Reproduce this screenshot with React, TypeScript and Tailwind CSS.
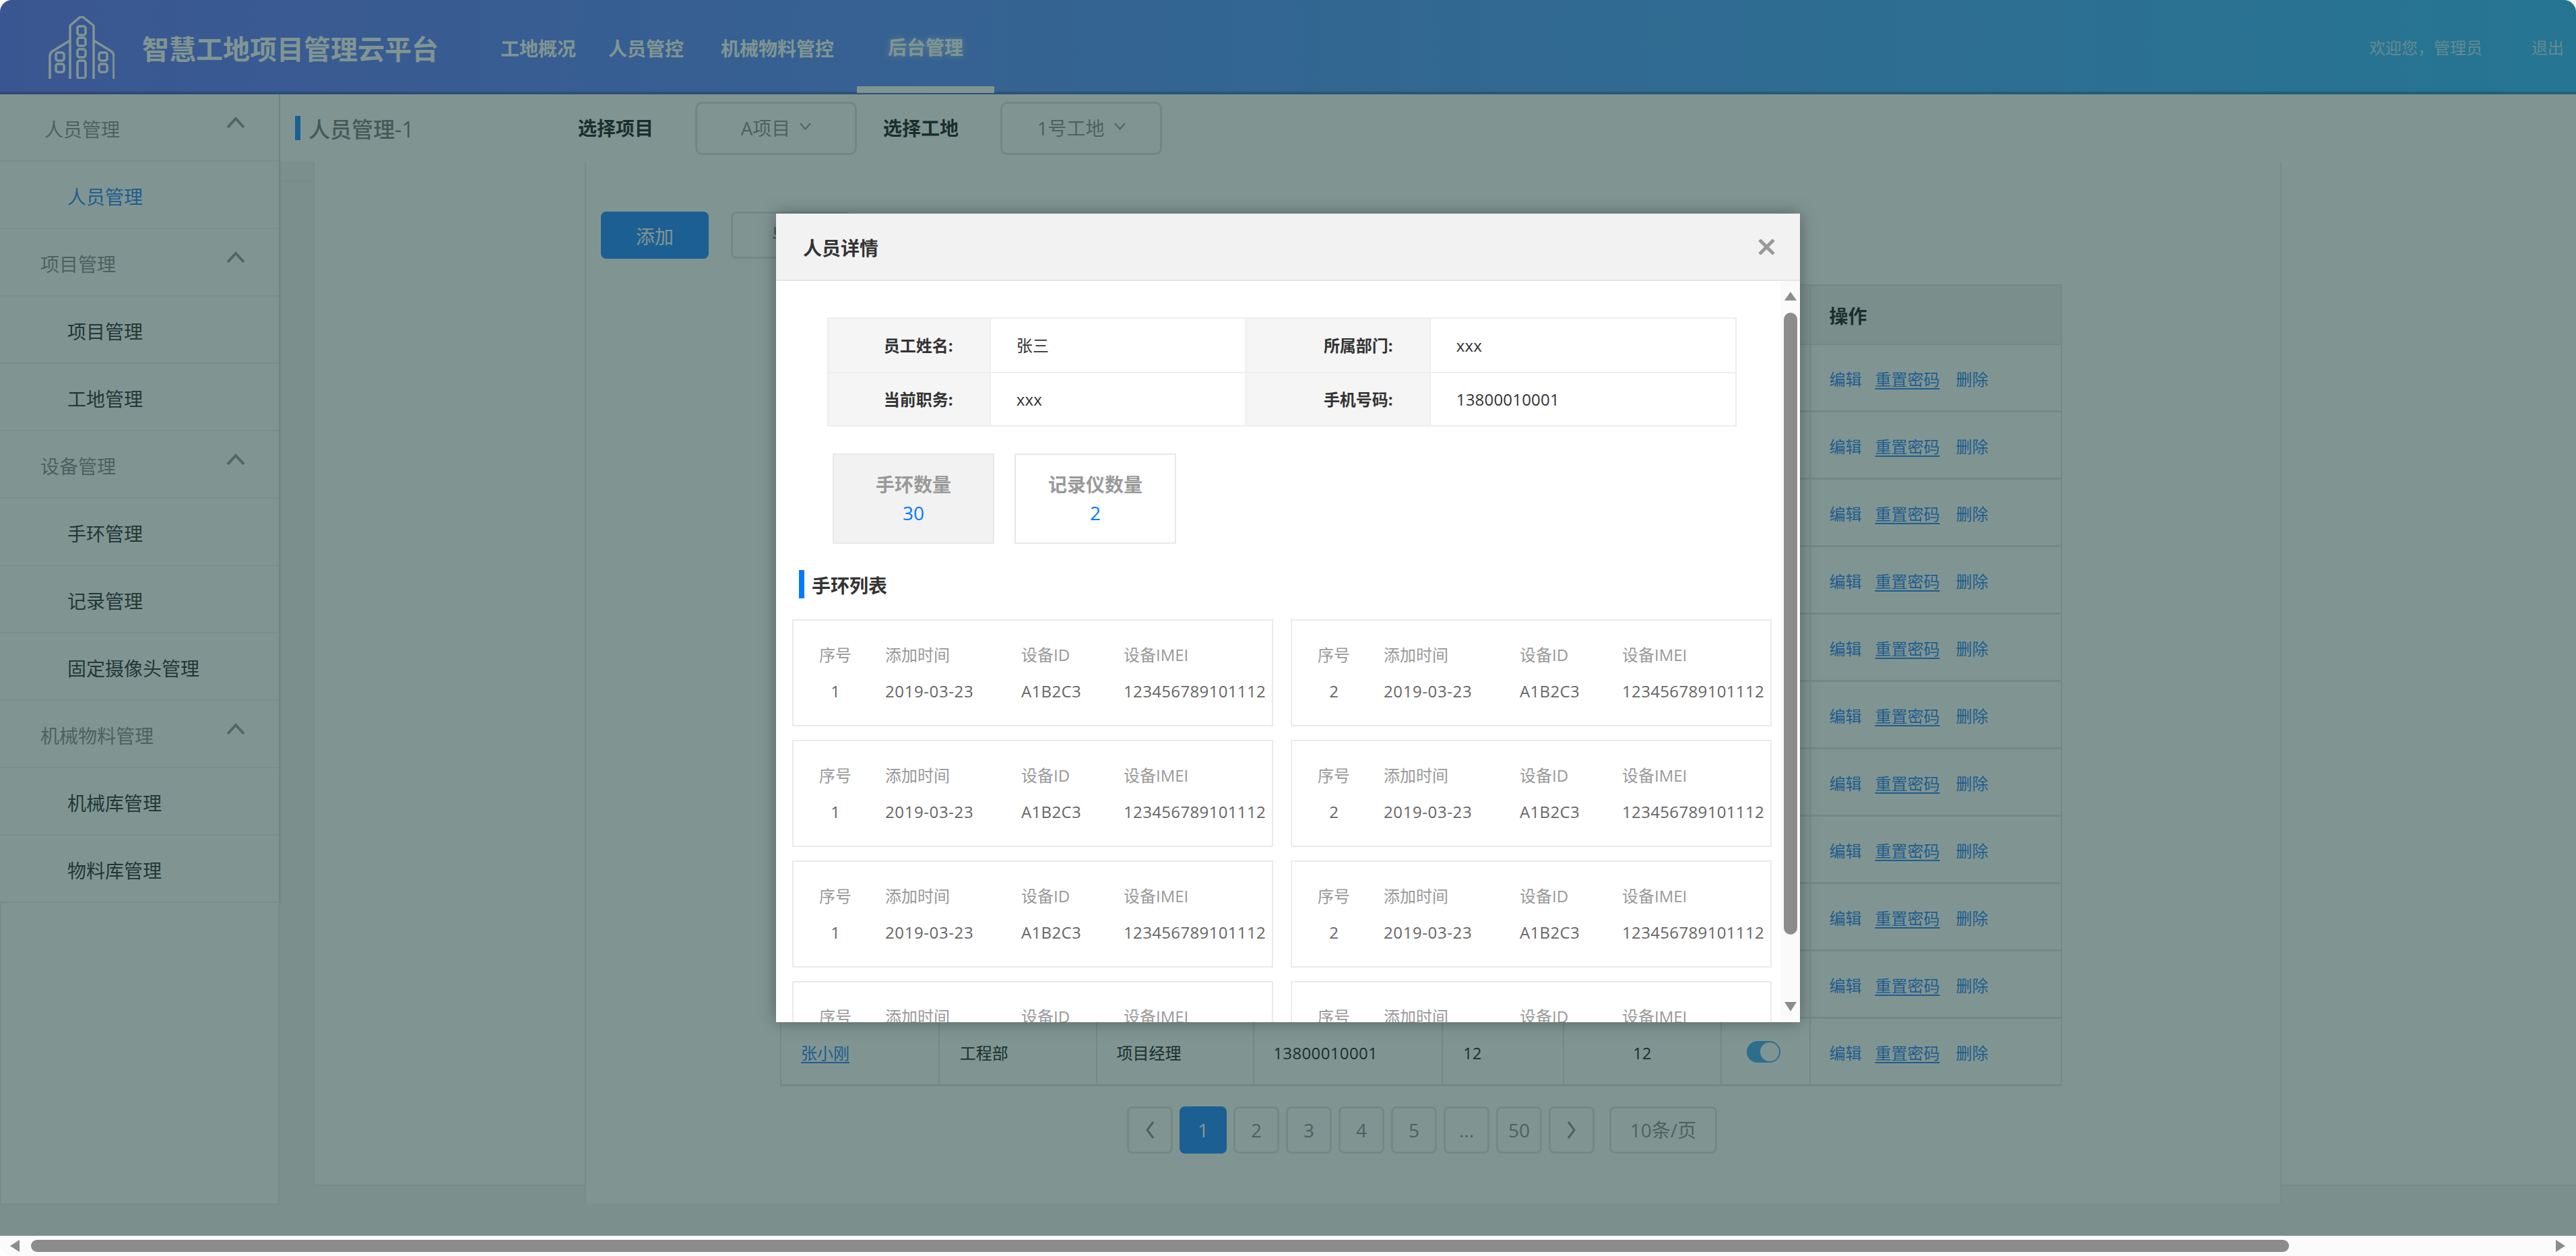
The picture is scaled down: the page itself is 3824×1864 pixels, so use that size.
import React from 'react';

const sideMenu = [
  { label: '人员管理', group: true, first: true },
  { label: '人员管理', active: true },
  { label: '项目管理', group: true },
  { label: '项目管理' },
  { label: '工地管理' },
  { label: '设备管理', group: true },
  { label: '手环管理' },
  { label: '记录管理' },
  { label: '固定摄像头管理' },
  { label: '机械物料管理', group: true },
  { label: '机械库管理' },
  { label: '物料库管理' },
];

const pages = ['1', '2', '3', '4', '5', '...', '50'];
const colWidths = ['w-[235px]', 'w-[234px]', 'w-[234px]', 'w-[280px]', 'w-[180px]', 'w-[234px]', 'w-[133px]', 'w-[373px]'];

function Logo() {
  return (
    <svg width="98" height="93" viewBox="0 0 98 93" fill="none" stroke="#ffffff" strokeWidth="3.5" strokeLinejoin="round" className="shrink-0">
      <path d="M32 93V14L46 2Q49 0 52 2L67 14V93" />
      <path d="M32 36L6 52Q2 55 2 60V93" />
      <path d="M67 36L93 52Q97 55 97 60V93" />
      <rect x="43" y="15" width="12" height="13" rx="3" />
      <rect x="43" y="32" width="12" height="12" rx="3" />
      <rect x="43" y="49" width="12" height="12" rx="3" />
      <rect x="43" y="66" width="12" height="26" rx="3" />
      <rect x="11" y="54" width="12" height="12" rx="3" />
      <rect x="11" y="71" width="12" height="12" rx="3" />
      <rect x="75" y="54" width="12" height="12" rx="3" />
      <rect x="75" y="71" width="12" height="12" rx="3" />
    </svg>
  );
}

function Header() {
  return (
    <header className="h-[140px] shrink-0 flex items-start bg-linear-to-r from-[#7381ff] to-[#49bfff] shadow-[inset_0_-4px_0_rgba(0,0,0,0.2)] text-white">
      <div className="ml-[72px] mt-6">
        <Logo />
      </div>
      <div className="ml-[41px] h-[136px] flex items-center pt-[10px] text-[40px] font-bold whitespace-nowrap">智慧工地项目管理云平台</div>
      <nav className="flex text-[28px] font-bold whitespace-nowrap">
        <div className="ml-[92px] h-[128px] flex items-center pt-4">工地概况</div>
        <div className="ml-12 h-[128px] flex items-center pt-4">人员管控</div>
        <div className="ml-[55px] h-[128px] flex items-center pt-4">机械物料管控</div>
        <div className="ml-[34px] h-[138px] w-[204px] flex items-center justify-center pt-3 border-b-[10px] border-white [text-shadow:0_0_10px_rgba(255,255,255,0.6)]">后台管理</div>
      </nav>
      <div className="ml-auto mr-[18px] h-[136px] flex items-center pt-[6px] text-[24px] text-white/70 whitespace-nowrap">
        <span>欢迎您，管理员</span>
        <span className="ml-[73px]">退出</span>
      </div>
    </header>
  );
}

function Sidebar() {
  return (
    <aside className="w-[416px] shrink-0 flex flex-col">
      <div className="bg-white border-r-2 border-[#dedede] shadow-[0_2px_4px_rgba(0,0,0,0.08)]">
        {sideMenu.map((item, i) => (
          <div key={i} className="h-[100px] flex items-center justify-between border-b-2 border-[#f0f0f0] text-[28px]">
            {item.group ? (
              <>
                <span className={`${item.first ? 'pl-[66px]' : 'pl-[60px]'} pt-[5px] text-[#999999]`}>{item.label}</span>
                <svg width="28" height="18" viewBox="0 0 28 18" fill="none" stroke="#a3a3a3" strokeWidth="4" className="mr-[50px] mb-[14px]">
                  <path d="M2 16L14 3L26 16" />
                </svg>
              </>
            ) : (
              <span className={`pl-[100px] pt-[5px] ${item.active ? 'text-[#3e8ef7]' : 'text-[#444444]'}`}>{item.label}</span>
            )}
          </div>
        ))}
      </div>
      <div className="h-[448px] w-[415px] bg-white border-2 border-t-0 border-[#ececec]" />
    </aside>
  );
}

function SmallChevron() {
  return (
    <svg width="17" height="11" viewBox="0 0 17 11" fill="none" stroke="#a8a8a8" strokeWidth="2.5" className="mb-[6px]">
      <path d="M1 1L8.5 9.5L16 1" />
    </svg>
  );
}

function TopBar() {
  return (
    <div className="h-[100px] bg-white flex items-center">
      <div className="ml-[22px] w-[420px] flex items-center">
        <span className="w-2 h-9 bg-[#3793ff]" />
        <span className="ml-3 pt-[4px] text-[32px] font-medium text-[#888888]">人员管理-1</span>
      </div>
      <span className="text-[28px] font-bold text-[#333333]">选择项目</span>
      <div className="ml-[62px] w-[240px] h-[79px] flex items-center justify-center gap-[14px] rounded-[10px] border-[3px] border-[#e3e3e3] text-[28px] text-[#999999]">
        <span>A项目</span>
        <SmallChevron />
      </div>
      <span className="ml-[39px] text-[28px] font-bold text-[#333333]">选择工地</span>
      <div className="ml-[62px] w-[240px] h-[79px] flex items-center justify-center gap-[14px] rounded-[10px] border-[3px] border-[#e3e3e3] text-[28px] text-[#999999]">
        <span>1号工地</span>
        <SmallChevron />
      </div>
    </div>
  );
}

function ActionCell() {
  return (
    <div className="flex items-center pl-[27px] pt-[4px] text-[24px] text-[#3e8ef7] whitespace-nowrap">
      <span>编辑</span>
      <span className="ml-5 underline underline-offset-4">重置密码</span>
      <span className="ml-6">删除</span>
    </div>
  );
}

function UserTable() {
  const rows = Array.from({ length: 11 });
  const cell = 'flex items-center pt-[4px] border-r-2 border-b-[3px] border-[#e6e6e6]';
  return (
    <div className="ml-[266px] mt-[38px] w-[1903px] border-l-2 border-t-2 border-[#e6e6e6] text-[24px] text-[#333333]">
      <div className="h-[88px] flex bg-[#f3f3f3]">
        {colWidths.map((w, i) => (
          <div key={i} className={`${w} h-full flex items-center border-r-2 border-b-2 border-[#e6e6e6] ${i === 7 ? 'pl-[27px] pt-[4px] text-[28px] font-bold' : ''}`}>
            {i === 7 ? '操作' : ''}
          </div>
        ))}
      </div>
      {rows.map((_, r) => {
        const last = r === rows.length - 1;
        return (
          <div key={r} className="h-[100px] flex">
            <div className={`${colWidths[0]} ${cell} pl-[29px] text-[#3e8ef7] underline underline-offset-4`}>{last ? '张小刚' : ''}</div>
            <div className={`${colWidths[1]} ${cell} pl-[30px]`}>{last ? '工程部' : ''}</div>
            <div className={`${colWidths[2]} ${cell} pl-[29px]`}>{last ? '项目经理' : ''}</div>
            <div className={`${colWidths[3]} ${cell} pl-[28px] tracking-[0.35px]`}>{last ? '13800010001' : ''}</div>
            <div className={`${colWidths[4]} ${cell} pl-[30px]`}>{last ? '12' : ''}</div>
            <div className={`${colWidths[5]} ${cell} justify-center`}>{last ? '12' : ''}</div>
            <div className={`${colWidths[6]} flex items-center pl-[37px] border-r-2 border-b-[3px] border-[#e6e6e6]`}>
              <span className="w-[50px] h-8 rounded-full bg-[#59b1f3] flex items-center justify-end pr-[2px]">
                <span className="w-[28px] h-[28px] rounded-full bg-white" />
              </span>
            </div>
            <div className={`${colWidths[7]} flex border-r-2 border-b-[3px] border-[#e6e6e6]`}>
              <ActionCell />
            </div>
          </div>
        );
      })}
    </div>
  );
}

function Pagination() {
  const cell = 'w-[68px] h-[70px] flex items-center justify-center rounded-[8px] border-[3px] border-[#e6e6e6] text-[#999999]';
  return (
    <div className="ml-[781px] mt-[30px] flex gap-[10px] text-[28px]">
      <div className={cell}>
        <svg width="16" height="28" viewBox="0 0 16 28" fill="none" stroke="#999999" strokeWidth="3">
          <path d="M13 2L4 14L13 26" />
        </svg>
      </div>
      {pages.map((p) => (
        <div key={p} className={p === '1' ? 'w-[70px] h-[70px] flex items-center justify-center rounded-[8px] bg-[#3793ff] text-white' : cell}>
          {p}
        </div>
      ))}
      <div className={cell}>
        <svg width="16" height="28" viewBox="0 0 16 28" fill="none" stroke="#999999" strokeWidth="3">
          <path d="M3 2L12 14L3 26" />
        </svg>
      </div>
      <div className="ml-3 w-[160px] h-[70px] flex items-center justify-center rounded-[8px] border-[3px] border-[#e6e6e6] text-[#999999]">10条/页</div>
    </div>
  );
}

function MainArea() {
  return (
    <div className="flex-1 flex flex-col min-w-0">
      <TopBar />
      <div className="flex-1 flex items-start">
        <div className="w-[49px] shrink-0 h-[30px] border-b-2 border-[#ececec]" />
        <div className="w-[403px] shrink-0 h-[1520px] bg-white border-l-2 border-b-2 border-[#ececec]" />
        <div className="w-[2519px] shrink-0 h-[1546px] bg-white border-x-2 border-[#ececec] pl-[22px] pt-[74px]">
          <div className="flex text-[28px]">
            <div className="w-[160px] h-[70px] rounded-[8px] bg-[#3793ff] text-white flex items-center justify-center pt-[3px]">添加</div>
            <div className="ml-[33px] w-[177px] h-[70px] rounded-[8px] border-[3px] border-[#e6e6e6] text-[#888888] flex items-center justify-center">导出</div>
          </div>
          <UserTable />
          <Pagination />
        </div>
        <div className="flex-1 h-[1520px] bg-white border-b-2 border-[#ececec]" />
      </div>
    </div>
  );
}

function InfoCell({ label, value, labelW, valueW }: { label: string; value: string; labelW: string; valueW: string }) {
  return (
    <>
      <div className={`${labelW} flex items-center justify-end pr-[54px] bg-[#f5f5f5] border-r-2 border-b-2 border-[#eeeeee] font-bold text-[#333333]`}>{label}</div>
      <div className={`${valueW} flex items-center pl-[38px] tracking-[0.2px] border-r-2 border-b-2 border-[#eeeeee] text-[#333333]`}>{value}</div>
    </>
  );
}

function BraceletCard({ no }: { no: string }) {
  return (
    <div className="h-[159px] border-2 border-[#eaeaea] pl-[38px] pt-[24px] text-[24px] grid grid-cols-[98px_202px_152px_1fr] grid-rows-[54px_54px] items-center whitespace-nowrap">
      <span className="w-12 text-center text-[#999999]">序号</span>
      <span className="text-[#999999]">添加时间</span>
      <span className="text-[#999999]">设备ID</span>
      <span className="text-[#999999]">设备IMEI</span>
      <span className="w-12 text-center text-[#666666]">{no}</span>
      <span className="tracking-[0.6px] text-[#666666]">2019-03-23</span>
      <span className="tracking-[0.35px] text-[#666666]">A1B2C3</span>
      <span className="tracking-[0.35px] text-[#666666]">123456789101112</span>
    </div>
  );
}

function Modal() {
  const cards = ['1', '2', '1', '2', '1', '2', '1', '2'];
  return (
    <div className="w-[1520px] h-[1200px] bg-white flex flex-col shadow-[0_0_24px_rgba(0,0,0,0.35)]">
      <div className="h-[100px] shrink-0 flex items-center justify-between pl-10 pr-[37px] bg-[#f2f2f2] border-b-2 border-[#e5e5e5]">
        <span className="pt-[4px] text-[28px] font-bold text-[#333333]">人员详情</span>
        <svg width="25" height="23" viewBox="0 0 25 23" stroke="#999999" strokeWidth="5">
          <path d="M2 1L23 22M23 1L2 22" />
        </svg>
      </div>
      <div className="flex-1 flex min-h-0">
        <div className="flex-1 min-w-0 overflow-hidden">
          <div className="ml-[76px] mt-[54px] w-[1350px] border-l-2 border-t-2 border-[#eeeeee] text-[24px]">
            <div className="h-[81px] flex">
              <InfoCell label="员工姓名:" value="张三" labelW="w-[241px]" valueW="w-[380px]" />
              <InfoCell label="所属部门:" value="xxx" labelW="w-[274px]" valueW="w-[455px]" />
            </div>
            <div className="h-[79px] flex">
              <InfoCell label="当前职务:" value="xxx" labelW="w-[241px]" valueW="w-[380px]" />
              <InfoCell label="手机号码:" value="13800010001" labelW="w-[274px]" valueW="w-[455px]" />
            </div>
          </div>
          <div className="ml-[84px] mt-[40px] flex gap-[30px] text-[28px] leading-[42px] text-center">
            <div className="w-[240px] h-[134px] flex flex-col justify-center bg-[#f2f2f2] border-2 border-[#e8e8e8]">
              <span className="font-bold text-[#999999]">手环数量</span>
              <span className="text-[#007bff]">30</span>
            </div>
            <div className="w-[240px] h-[134px] flex flex-col justify-center border-2 border-[#e8e8e8]">
              <span className="font-bold text-[#999999]">记录仪数量</span>
              <span className="text-[#007bff]">2</span>
            </div>
          </div>
          <div className="ml-[34px] mt-[39px] h-[42px] flex items-center border-l-8 border-[#007bff] pl-[11px] pt-[3px] text-[28px] font-bold text-[#333333]">手环列表</div>
          <div className="ml-6 mt-[31px] w-[1454px] grid grid-cols-[714px_714px] gap-x-[26px] gap-y-5">
            {cards.map((no, i) => (
              <BraceletCard key={i} no={no} />
            ))}
          </div>
        </div>
        <div className="w-[29px] shrink-0 bg-[#fafafa] flex flex-col items-center pt-4 pb-4">
          <svg width="18" height="13" viewBox="0 0 18 13" fill="#8c8c8c">
            <path d="M9 0L18 13H0Z" />
          </svg>
          <div className="mt-[18px] w-5 h-[923px] rounded-full bg-[#8c8c8c]" />
          <svg width="18" height="14" viewBox="0 0 18 14" fill="#8c8c8c" className="mt-auto">
            <path d="M0 0H18L9 14Z" />
          </svg>
        </div>
      </div>
    </div>
  );
}

function PageScrollbar() {
  return (
    <div className="h-[30px] shrink-0 bg-[#fbfbfb] flex items-center pl-[15px] pr-4">
      <svg width="14" height="18" viewBox="0 0 14 18" fill="#8c8c8c">
        <path d="M14 0V18L0 9Z" />
      </svg>
      <div className="ml-[17px] w-[3352px] h-[18px] rounded-full bg-[#8c8c8c]" />
      <svg width="14" height="18" viewBox="0 0 14 18" fill="#8c8c8c" className="ml-auto">
        <path d="M0 0V18L14 9Z" />
      </svg>
    </div>
  );
}

export default function App() {
  return (
    <div className="w-[3824px] h-[1864px] flex flex-col overflow-hidden rounded-[18px] bg-white font-['Open_Sans','Noto_Sans_CJK_SC',sans-serif]">
      <div className="relative flex-1 min-h-0 flex flex-col bg-[#f5f4f5]">
        <Header />
        <div className="flex-1 flex min-h-0">
          <Sidebar />
          <MainArea />
        </div>
        {/* backdrop + dialog */}
        <div className="absolute inset-0 bg-[#012b25]/50 flex justify-center pt-[317px]">
          <Modal />
        </div>
      </div>
      <PageScrollbar />
    </div>
  );
}
